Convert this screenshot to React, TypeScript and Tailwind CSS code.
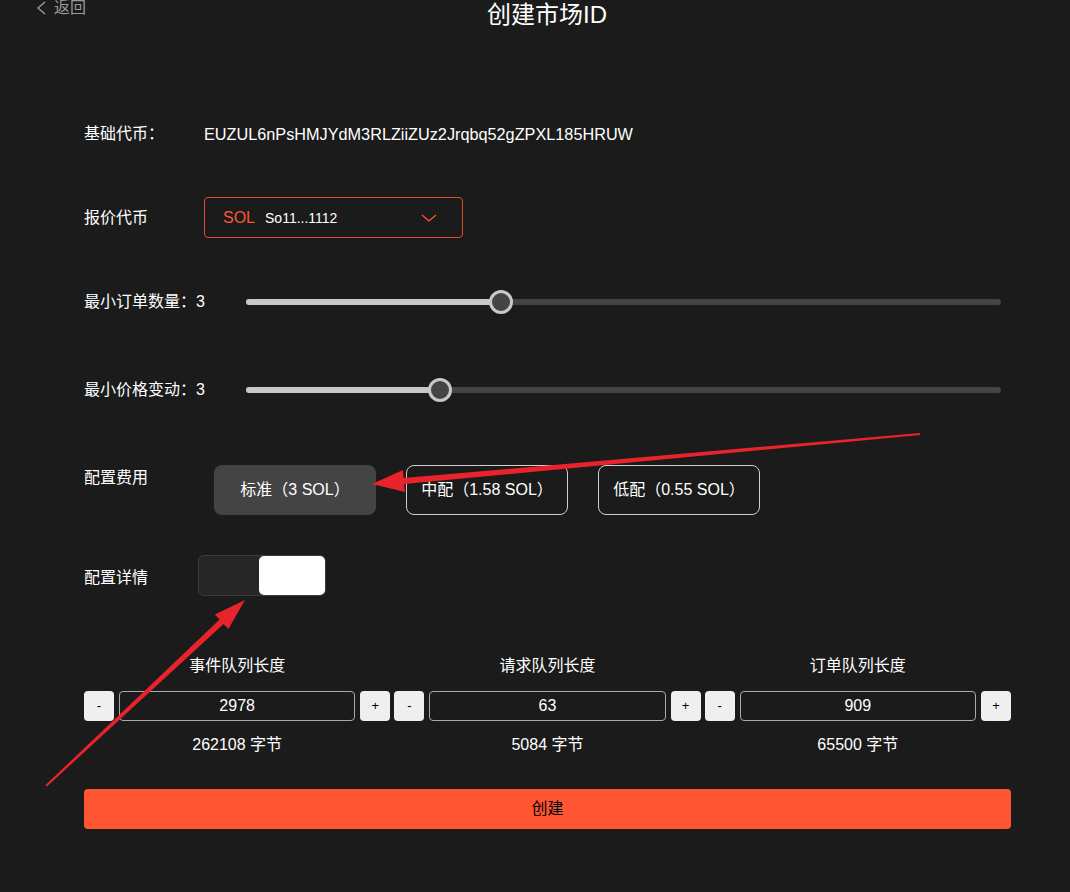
import { useState } from 'react'

const font = { fontFamily: '"Liberation Sans", "Noto Sans CJK SC", sans-serif' }

const fees = [
  { label: '标准（3 SOL）' },
  { label: '中配（1.58 SOL）' },
  { label: '低配（0.55 SOL）' },
]

const queues = [
  { title: '事件队列长度', value: 2978, bytes: '262108 字节' },
  { title: '请求队列长度', value: 63, bytes: '5084 字节' },
  { title: '订单队列长度', value: 909, bytes: '65500 字节' },
]

function Slider({ label, pct }: { label: string; pct: number }) {
  return (
    <div className="flex h-6 items-center">
      <div className="w-[162px] text-base text-white">{label}</div>
      <div className="relative h-[6px] flex-1 rounded-full bg-[#444]">
        <div className="h-full rounded-full bg-[#c8c8c8]" style={{ width: `${pct}%` }} />
        <div
          className="absolute top-1/2 h-6 w-6 -translate-x-1/2 -translate-y-1/2 rounded-full border-[3px] border-[#c8c8c8] bg-[#444]"
          style={{ left: `${pct}%` }}
        />
      </div>
      <div className="w-[10px]" />
    </div>
  )
}

function App() {
  const [fee, setFee] = useState(0)
  const [detail, setDetail] = useState(true)

  return (
    <div className="relative min-h-screen w-full overflow-hidden bg-[#1b1b1b] text-white" style={font}>
      {/* header */}
      <div className="relative h-[30px]">
        <button className="absolute left-[36px] top-0 flex h-4 items-center gap-[7px] text-base leading-4 text-[#9a9a9a]">
          <svg width="11" height="14" viewBox="0 0 11 14" fill="none">
            <path d="M9 1 L2 7 L9 13" stroke="#9a9a9a" strokeWidth="1.4" />
          </svg>
          <span>返回</span>
        </button>
        <h1 className="pl-[24px] text-center text-2xl leading-[30px] text-white">创建市场ID</h1>
      </div>

      <div className="pl-[84px] pr-[59px]">
        {/* base token */}
        <div className="mt-[92px] flex h-6 items-center text-base">
          <div className="w-[120px]">基础代币：</div>
          <div className="text-[16.25px]">EUZUL6nPsHMJYdM3RLZiiZUz2Jrqbq52gZPXL185HRUW</div>
        </div>

        {/* quote token */}
        <div className="mt-[51px] flex h-[41px] items-center">
          <div className="w-[120px] text-base">报价代币</div>
          <div className="flex h-[41px] w-[259px] items-center rounded-[4px] border border-[#e04a2d] pl-[18px] pr-[25px]">
            <span className="text-base text-[#ff5533]">SOL</span>
            <span className="ml-[10px] text-sm text-white">So11...1112</span>
            <svg className="ml-auto" width="16" height="10" viewBox="0 0 16 10" fill="none">
              <path d="M1 2 L8 8 L15 2" stroke="#ff5533" strokeWidth="1.3" />
            </svg>
          </div>
        </div>

        <div className="mt-[52px]">
          <Slider label="最小订单数量：3" pct={33.8} />
        </div>
        <div className="mt-[64px]">
          <Slider label="最小价格变动：3" pct={25.7} />
        </div>

        {/* fee */}
        <div className="mt-[63px] flex items-start">
          <div className="mt-px w-[130px] text-base leading-6">配置费用</div>
          <div className="flex gap-[30px]">
            {fees.map((f, i) => (
              <button
                key={f.label}
                onClick={() => setFee(i)}
                className={
                  i === fee
                    ? 'h-[50px] w-[162px] rounded-lg bg-[#444] text-base text-white'
                    : 'h-[50px] w-[162px] rounded-lg border border-[#cfcfcf] text-base text-white'
                }
              >
                {f.label}
              </button>
            ))}
          </div>
        </div>

        {/* detail toggle */}
        <div className="mt-[40px] flex h-[41px] items-center">
          <div className="w-[114px] pt-1 text-base">配置详情</div>
          <button
            onClick={() => setDetail(d => !d)}
            className="flex h-[41px] w-[128px] rounded-md border border-[#3c3c3c] bg-[#262626] p-0"
          >
            <div className={detail ? 'ml-auto h-full w-[66px] rounded-[5px] bg-white' : 'h-full w-[66px] rounded-[5px] bg-white'} />
          </button>
        </div>

        {/* queues */}
        <div className="mt-[58px] grid grid-cols-3 gap-[4px]">
          {queues.map(q => (
            <div key={q.title} className="flex flex-col items-center">
              <div className="h-6 text-base leading-6">{q.title}</div>
              <div className="mt-[13px] flex w-full gap-[5px]">
                <button className="h-[30px] w-[30px] shrink-0 rounded-[4px] bg-[#efefef] text-[13px] text-black">-</button>
                <input
                  readOnly
                  value={q.value}
                  className="h-[30px] min-w-0 flex-1 rounded-[4px] border border-[#aaa] bg-transparent text-center text-base text-white outline-none"
                />
                <button className="h-[30px] w-[30px] shrink-0 rounded-[4px] bg-[#efefef] text-[13px] text-black">+</button>
              </div>
              <div className="mt-[12px] h-6 text-base leading-6">{q.bytes}</div>
            </div>
          ))}
        </div>

        <button className="mt-[32px] h-10 w-full rounded-[4px] bg-[#ff5533] text-base text-black">创建</button>
      </div>

      {/* annotation arrows */}
      <svg className="pointer-events-none absolute left-0 top-0" width="1070" height="892">
        <polygon
          fill="#e8232b"
          points="372,484 404.9,492.1 404.2,484.1 920.1,435 919.9,433 403.6,478.1 402.9,470.1"
        />
        <polygon
          fill="#e8232b"
          points="245,600 228.4,629.1 223.6,624 46.7,786.7 45.3,785.3 219.6,619.6 214.8,614.5"
        />
      </svg>
    </div>
  )
}

export default App
